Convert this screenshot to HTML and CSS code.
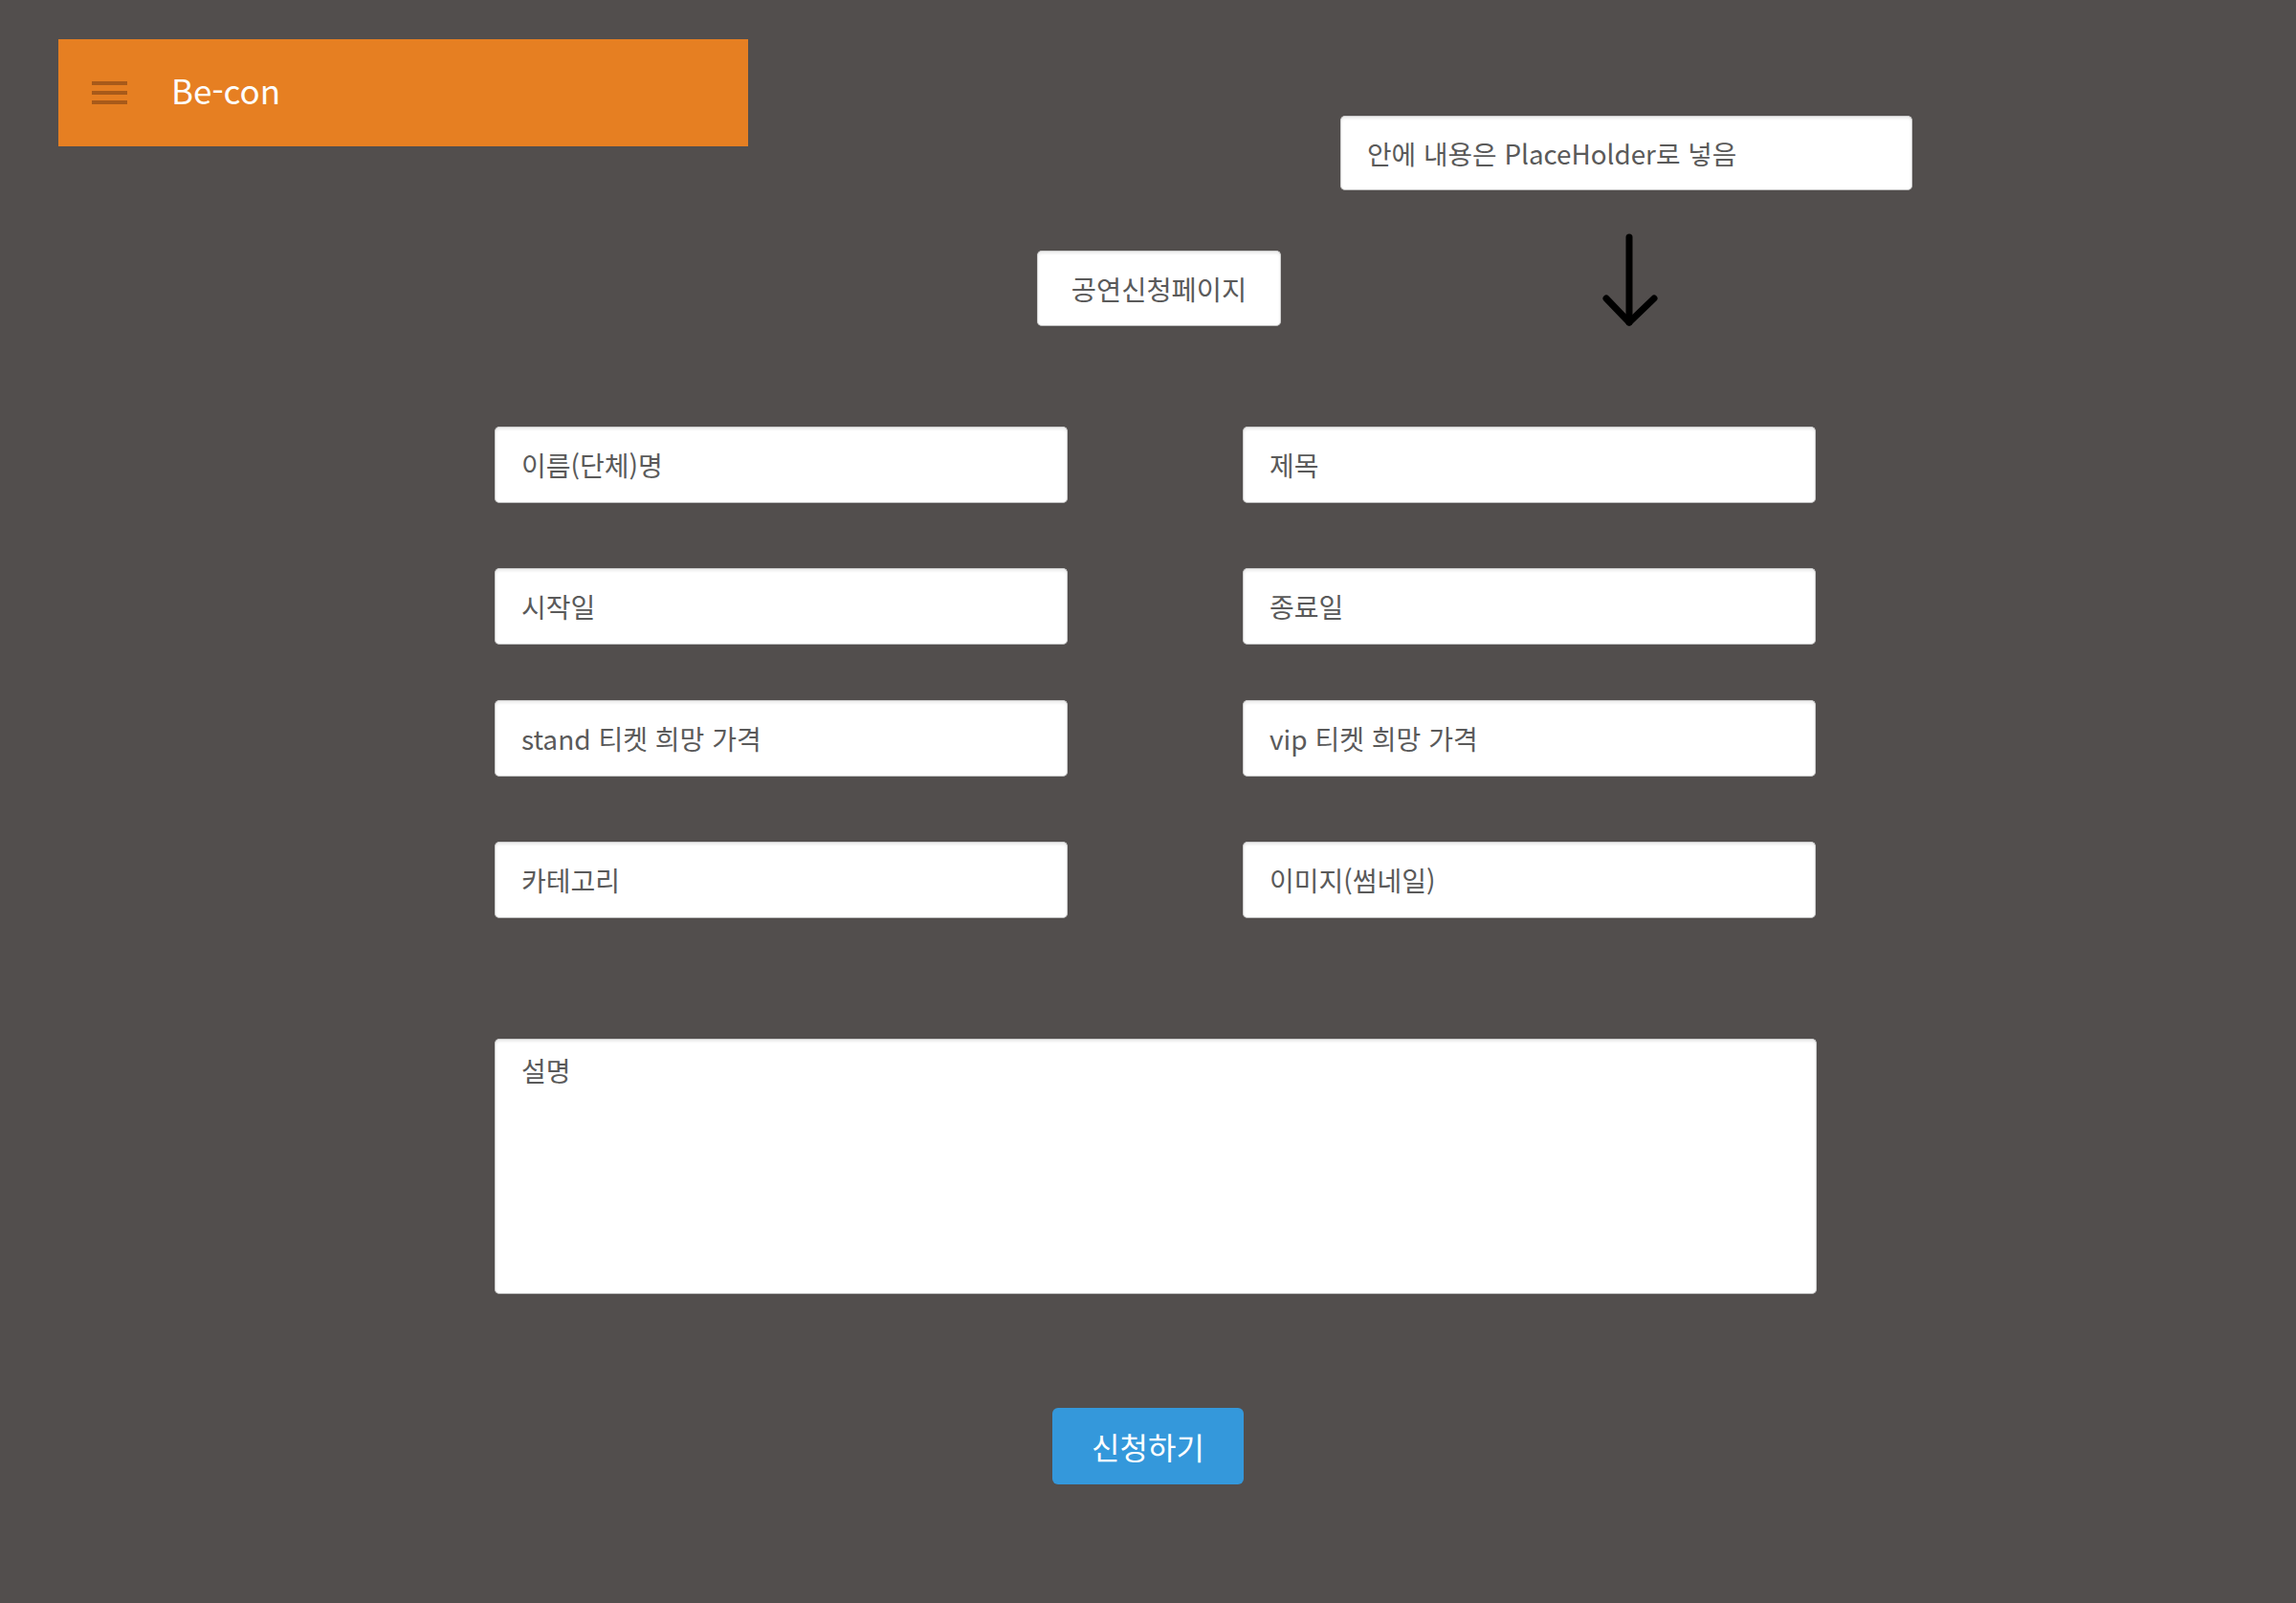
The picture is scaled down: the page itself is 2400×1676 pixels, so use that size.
FILE: index.html
```html
<!DOCTYPE html>
<html lang="ko">
<head>
<meta charset="utf-8">
<title>Be-con 공연신청페이지</title>
<link rel="stylesheet" href="styles.css">
</head>
<body>
<div class="page">
  <div class="top">
    <header class="appbar">
      <span class="menu"><i></i><i></i><i></i></span>
      <span class="brand">Be-con</span>
    </header>
    <div class="box note">안에 내용은 PlaceHolder로 넣음</div>
  </div>
  <div class="titlerow">
    <div class="box title">공연신청페이지</div>
    <svg class="arrow" width="58" height="98" viewBox="0 0 58 98">
      <path d="M28 4 V93" />
      <path d="M4 68 L28 93 L54 68" />
    </svg>
  </div>
  <div class="form">
    <div class="row">
      <div class="box field">이름(단체)명</div>
      <div class="box field">제목</div>
    </div>
    <div class="row r2">
      <div class="box field">시작일</div>
      <div class="box field">종료일</div>
    </div>
    <div class="row r3">
      <div class="box field">stand 티켓 희망 가격</div>
      <div class="box field">vip 티켓 희망 가격</div>
    </div>
    <div class="row r4">
      <div class="box field">카테고리</div>
      <div class="box field">이미지(썸네일)</div>
    </div>
    <div class="box area">설명</div>
  </div>
  <div class="submit-row">
    <button class="submit" type="button">신청하기</button>
  </div>
</div>
</body>
</html>
```
FILE: styles.css
```css
html, body {
  margin: 0;
  padding: 0;
}
body {
  background: #524e4d;
  font-family: "Noto Sans CJK KR", "Noto Sans", sans-serif;
  width: 2400px;
  height: 1676px;
  overflow: hidden;
}
.page {
  padding-top: 41px;
}
.top {
  display: flex;
  align-items: flex-start;
  padding-left: 61px;
}
.appbar {
  box-sizing: border-box;
  width: 721px;
  height: 112px;
  background: #e67f22;
  display: flex;
  align-items: center;
  padding-left: 35px;
}
.menu {
  display: flex;
  flex-direction: column;
  gap: 6px;
  width: 37px;
}
.menu i {
  display: block;
  height: 4px;
  background: #a85a1a;
}
.brand {
  margin-left: 46px;
  font-size: 35px;
  color: #fdfdfd;
  line-height: 1;
  margin-top: -7px;
}
.box {
  box-sizing: border-box;
  background: #fff;
  border: 1px solid #cfcfcf;
  border-bottom-color: #bdbdbd;
  border-radius: 5px;
  box-shadow: inset 0 2px 3px rgba(0, 0, 0, 0.08);
  color: #5a5a5a;
  font-size: 28px;
  display: flex;
  align-items: center;
  padding: 0 27px;
  white-space: nowrap;
}
.note {
  margin-left: 619px;
  margin-top: 80px;
  width: 598px;
  height: 78px;
  font-size: 27.8px;
}
.titlerow {
  display: flex;
  align-items: flex-start;
  padding-left: 1084px;
  margin-top: 45px;
}
.title {
  margin-top: 18px;
  width: 255px;
  height: 79px;
  padding: 0;
  justify-content: center;
  font-size: 28.5px;
}
.arrow {
  margin-left: 336px;
  fill: none;
  stroke: #000;
  stroke-width: 7;
  stroke-linecap: round;
  stroke-linejoin: round;
}
.form {
  margin-top: 104px;
  padding-left: 517px;
}
.row {
  display: grid;
  grid-template-columns: 599px 599px;
  column-gap: 183px;
}
.r2 { margin-top: 68px; }
.r3 { margin-top: 58px; }
.r4 { margin-top: 68px; }
.field {
  height: 80px;
}
.area {
  margin-top: 126px;
  width: 1382px;
  height: 267px;
  align-items: flex-start;
  padding-top: 13px;
  line-height: 1.4;
}
.submit-row {
  margin-top: 119px;
  padding-left: 1100px;
}
.submit {
  width: 200px;
  height: 80px;
  border: none;
  border-radius: 6px;
  background: #3498db;
  color: #fff;
  font-family: "Noto Sans CJK KR", "Noto Sans", sans-serif;
  font-size: 32px;
  padding: 0;
  display: block;
}
```
